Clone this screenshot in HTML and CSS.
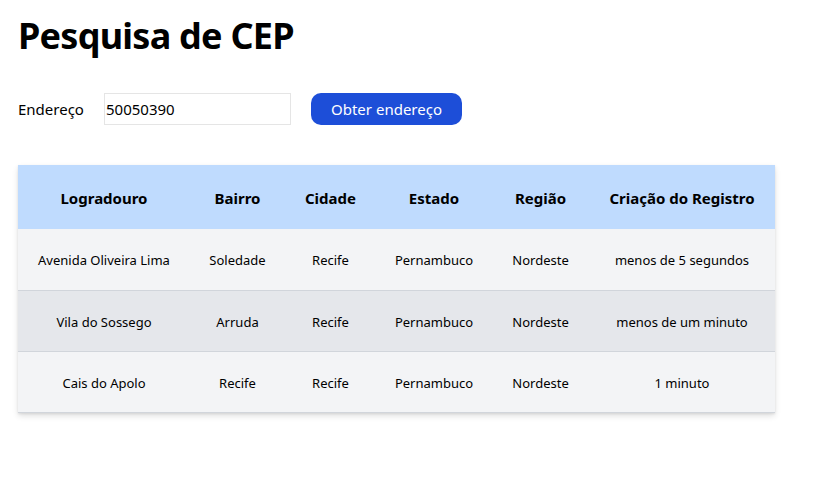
FILE: index.html
```html
<!DOCTYPE html>
<html lang="pt-BR">
<head>
<meta charset="utf-8">
<title>Pesquisa de CEP</title>
<link rel="stylesheet" href="styles.css">
</head>
<body>
<main class="page">
  <h1 class="title">Pesquisa de CEP</h1>
  <form class="search">
    <label class="search-label" for="cep">Endereço</label>
    <input class="search-input" id="cep" type="text" value="50050390">
    <button class="search-button" type="button">Obter endereço</button>
  </form>
  <table class="results">
    <colgroup>
      <col class="c1"><col class="c2"><col class="c3"><col class="c4"><col class="c5"><col class="c6">
    </colgroup>
    <thead>
      <tr>
        <th>Logradouro</th><th>Bairro</th><th>Cidade</th><th>Estado</th><th>Região</th><th>Criação do Registro</th>
      </tr>
    </thead>
    <tbody>
      <tr>
        <td>Avenida Oliveira Lima</td><td>Soledade</td><td>Recife</td><td>Pernambuco</td><td>Nordeste</td><td>menos de 5 segundos</td>
      </tr>
      <tr>
        <td>Vila do Sossego</td><td>Arruda</td><td>Recife</td><td>Pernambuco</td><td>Nordeste</td><td>menos de um minuto</td>
      </tr>
      <tr>
        <td>Cais do Apolo</td><td>Recife</td><td>Recife</td><td>Pernambuco</td><td>Nordeste</td><td>1 minuto</td>
      </tr>
    </tbody>
  </table>
</main>
</body>
</html>
```
FILE: styles.css
```css
* { box-sizing: border-box; }
html, body { margin: 0; padding: 0; background: #ffffff; }
body {
  font-family: "Noto Sans", "Open Sans", sans-serif;
  color: #000;
}
.page { padding: 12px 18px; }
.title {
  margin: 0;
  font-size: 36px;
  line-height: 48px;
  font-weight: 700;
  letter-spacing: -0.75px;
}
.search {
  display: flex;
  align-items: center;
  margin-top: 33px;
  height: 32px;
}
.search-label {
  font-size: 15px;
  width: 86px;
}
.search-input {
  width: 187px;
  height: 32px;
  border: 1px solid #e5e5e5;
  padding: 0 0 0 1px;
  font: inherit;
  font-size: 15px;
  color: #000;
  outline: none;
}
.search-button {
  margin-left: 20px;
  width: 151px;
  height: 32px;
  border: 0;
  border-radius: 10px;
  background: #1d4ed8;
  color: #fff;
  font: inherit;
  font-size: 15px;
  padding: 0;
}
.results {
  margin-top: 40px;
  width: 757px;
  table-layout: fixed;
  border-collapse: collapse;
  box-shadow: 0 3px 6px rgba(0,0,0,0.12), 0 1px 2px rgba(0,0,0,0.08);
  text-align: center;
}
.c1 { width: 172px; }
.c2 { width: 95px; }
.c3 { width: 91px; }
.c4 { width: 116px; }
.c5 { width: 97px; }
.c6 { width: 186px; }
.results th {
  background: #bfdbfe;
  height: 64px;
  font-size: 15px;
  font-weight: 700;
  padding: 2px 0 0;
}
.results td {
  height: 61px;
  font-size: 13px;
  padding: 2px 0 0;
  border-bottom: 1px solid #d1d5db;
  background: #f3f4f6;
}
.results tbody tr:nth-child(2) td { background: #e5e7eb; }
```
